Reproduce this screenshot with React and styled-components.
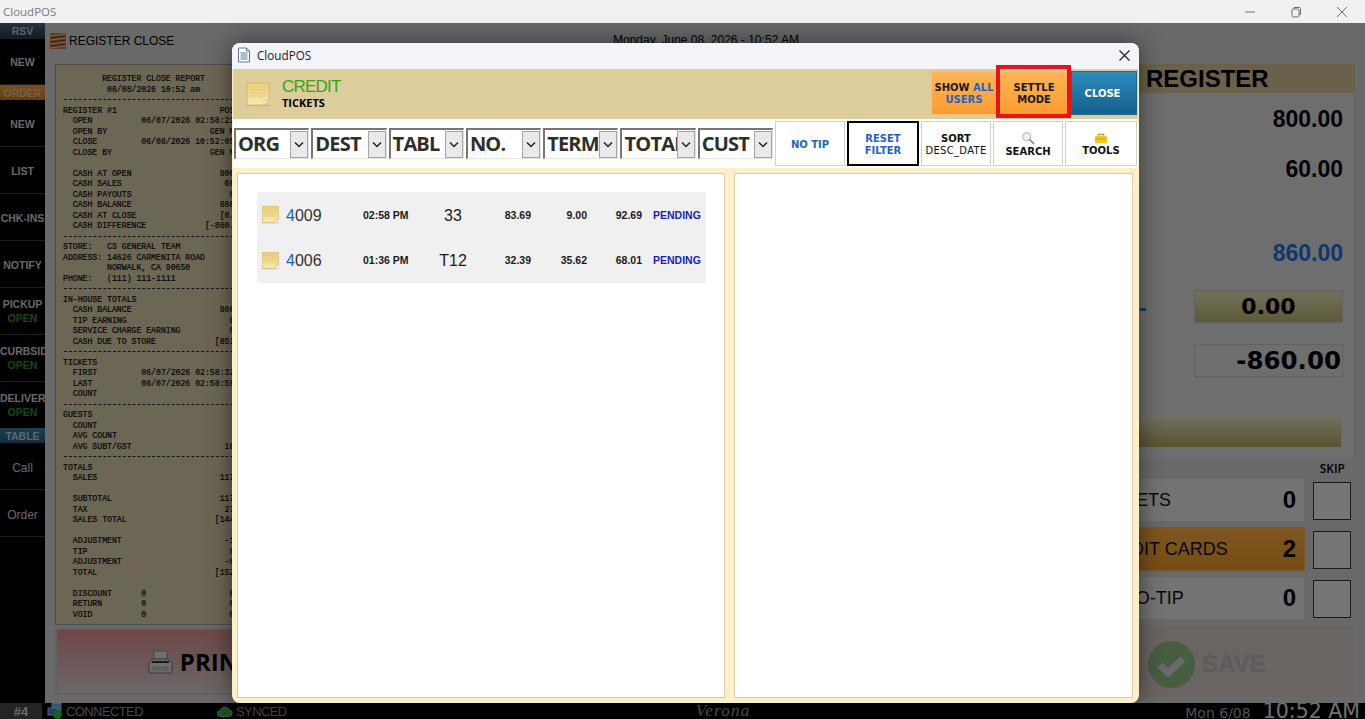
import React from "react"
import styled, { createGlobalStyle } from "styled-components"

const GlobalStyle = createGlobalStyle`
  html, body {
    margin: 0;
    padding: 0;
    height: 100%;
    overflow: hidden;
    font-family: "Liberation Sans", Arial, sans-serif;
  }
  * {
    box-sizing: border-box;
  }
`

const Page = styled.div`
  width: 1365px;
  height: 719px;
  display: flex;
  flex-direction: column;
  overflow: hidden;
  background: #fff;
`

const TitleBar = styled.div`
  height: 23px;
  flex: none;
  display: flex;
  align-items: center;
  justify-content: space-between;
  background: #f1f1f1;
  color: #7b7b7b;
  font-family: "Open Sans", sans-serif;
  font-size: 11.5px;
  padding-left: 3px;
`

const WindowButtons = styled.div`
  display: flex;
  align-items: center;
  gap: 34px;
  padding-right: 17px;
`

const Screen = styled.div`
  position: relative;
  flex: 1;
  display: flex;
  flex-direction: column;
  min-height: 0;
`

const Overlay = styled.div`
  position: absolute;
  inset: 0;
  background: rgba(0, 0, 0, 0.5);
`

const Workspace = styled.div`
  flex: 1;
  min-height: 0;
  display: flex;
`

const Sidebar = styled.nav`
  width: 45px;
  flex: none;
  background: #000;
  display: flex;
  flex-direction: column;
  overflow: hidden;
`

const SideBand = styled.div`
  height: ${p => p.$h || 16}px;
  flex: none;
  display: flex;
  align-items: center;
  justify-content: center;
  font-size: 10.5px;
  font-weight: 700;
  color: ${p => p.$c};
  background: ${p => p.$bg};
`

const SideItem = styled.div`
  height: ${p => p.$h || 47}px;
  flex: none;
  display: flex;
  flex-direction: column;
  align-items: ${p => (p.$long ? "flex-start" : "center")};
  justify-content: center;
  overflow: hidden;
  padding-top: ${p => p.$nudge || 0}px;
  border-bottom: ${p => (p.$plain ? "none" : "1px solid #3a3a3a")};
  color: #d0d0d0;
  font-size: ${p => (p.$soft ? 12 : 10.5)}px;
  font-weight: ${p => (p.$soft ? 400 : 700)};
  line-height: 14px;
  white-space: nowrap;
`

const OpenTag = styled.span`
  align-self: center;
  color: #27922a;
`

const Main = styled.main`
  flex: 1;
  min-width: 0;
  display: flex;
  flex-direction: column;
  background: #d2d2d2;
`

const MainHeader = styled.header`
  height: 41px;
  flex: none;
  position: relative;
  display: flex;
  align-items: center;
  gap: 3px;
  padding: 0 0 6px 5px;
  color: #000;
`

const HeaderTitle = styled.span`
  font-size: 12px;
`

const HeaderDate = styled.span`
  position: absolute;
  left: 568px;
  top: 10px;
  font-size: 12px;
  white-space: nowrap;
`

const Columns = styled.div`
  flex: 1;
  min-height: 0;
  display: flex;
  justify-content: space-between;
  padding: 0 10px 6px 10px;
`

const LeftColumn = styled.div`
  width: 292px;
  display: flex;
  flex-direction: column;
  gap: 3px;
`

const Receipt = styled.pre`
  margin: 0;
  height: 561px;
  flex: none;
  padding: 9px 0 0 7px;
  background: #d8cca8;
  border: 1px solid #999;
  font-family: "Liberation Mono", monospace;
  font-size: 8.17px;
  line-height: 10.5px;
  font-weight: 400;
  color: #000;
  -webkit-text-stroke: 0.15px #000;
  overflow: hidden;
`

const PrintButton = styled.button`
  flex: 1;
  margin-bottom: 2px;
  border: 2px solid #c2c2c2;
  background: linear-gradient(#de8f8f, #d9b3b3 55%, #d6d0d0);
  display: flex;
  align-items: center;
  justify-content: center;
  gap: 7px;
  font-family: "Open Sans", sans-serif;
  font-size: 24px;
  font-weight: 700;
  color: #000;
  padding: 0 2px 0 0;
`

const RightColumn = styled.div`
  width: 270px;
  display: flex;
  flex-direction: column;
`

const RegisterHead = styled.div`
  height: 29px;
  flex: none;
  background: #d4c395;
  font-size: 24px;
  font-weight: 700;
  color: #000;
  line-height: 30px;
  padding-left: 61px;
`

const RegisterBody = styled.div`
  height: 365px;
  flex: none;
  background: #dcdcdc;
  border-right: 1px solid #c4c4c4;
  padding: 14px 11px 0 0;
  display: flex;
  flex-direction: column;
  align-items: flex-end;
`

const Amount = styled.div`
  height: 24px;
  margin-bottom: ${p => p.$after}px;
  font-size: 23px;
  font-weight: 700;
  line-height: 24px;
  color: ${p => p.$color || "#000"};
`

const AmountRow = styled.div`
  display: flex;
  align-items: center;
  justify-content: space-between;
  width: 100%;
  margin-bottom: 21px;
`

const BlueDash = styled.span`
  padding: 4px 0 0 54px;
  font-size: 23px;
  font-weight: 700;
  color: #1e6fdc;
`

const TenderBox = styled.div`
  width: 149px;
  height: 33px;
  border: 1px solid #c4c4c4;
  display: flex;
  align-items: center;
  justify-content: ${p => (p.$bar ? "center" : "flex-end")};
  padding-right: ${p => (p.$bar ? 0 : 1)}px;
  font-family: "DejaVu Sans", sans-serif;
  font-size: ${p => (p.$bar ? 22 : 24.5)}px;
  font-weight: 700;
  color: #000;
  background: ${p => (p.$bar ? "linear-gradient(#e4e0b8, #bcb672)" : "transparent")};
`

const OliveBar = styled.div`
  align-self: flex-end;
  width: 240px;
  height: 32px;
  margin: 38px 2px 0 0;
  background: linear-gradient(#e2e2c8, #b0a860);
`

const SkipLabel = styled.div`
  height: 20px;
  flex: none;
  padding-top: 2px;
  padding-right: 10px;
  text-align: right;
  font-family: "Open Sans", sans-serif;
  font-size: 12px;
  font-weight: 600;
  color: #000;
`

const CountRow = styled.div`
  height: 49px;
  flex: none;
  display: flex;
  align-items: flex-start;
  gap: 8px;
  padding-right: 4px;
`

const CountCard = styled.div`
  width: 220px;
  height: 44px;
  display: flex;
  align-items: center;
  justify-content: space-between;
  padding: 0 8px 0 ${p => p.$pad}px;
  background: ${p => (p.$active ? "linear-gradient(#fcae42, #ee9a24)" : "#e6e6e6")};
  border: 1px solid ${p => (p.$active ? "#f0b060" : "#d0d0d0")};
  font-size: 18px;
  color: #111;
  white-space: nowrap;
`

const CountValue = styled.b`
  font-size: 24px;
  color: #000;
`

const SkipBox = styled.div`
  width: 38px;
  height: 38px;
  margin-top: 4px;
  background: #ececec;
  border: 1px solid #333;
`

const SaveButton = styled.div`
  flex: 1;
  margin: 0 2px 0 0;
  display: flex;
  align-items: center;
  gap: 7px;
  padding: 6px 0 0 63px;
  background: #d4c8c4;
  font-size: 24px;
  font-weight: 700;
  color: #bcb6b4;
`

const StatusBar = styled.footer`
  height: 16px;
  flex: none;
  display: flex;
  align-items: center;
  background: #000;
  color: #909090;
  font-size: 13px;
  letter-spacing: -0.6px;
  overflow: hidden;
`

const StatusCell = styled.div`
  width: 42px;
  height: 100%;
  flex: none;
  display: flex;
  align-items: center;
  justify-content: center;
  background: #484848;
  font-weight: 700;
  font-size: 13px;
  letter-spacing: 0;
  color: #d0d0d0;
`

const StatusItem = styled.div`
  display: flex;
  align-items: center;
  gap: 3px;
  width: ${p => p.$w}px;
  flex: none;
  padding-left: ${p => p.$pad || 0}px;
`

const Brand = styled.div`
  width: 252px;
  flex: none;
  text-align: center;
  font-family: "Liberation Serif", serif;
  font-style: italic;
  font-size: 17px;
  line-height: 16px;
  letter-spacing: 1.2px;
  color: #a8a8a8;
`

const Clock = styled.div`
  margin-left: auto;
  align-self: flex-start;
  display: flex;
  align-items: baseline;
  gap: 12px;
  padding: 1px 5px 0 0;
  font-family: "DejaVu Sans", sans-serif;
  font-size: 14px;
  letter-spacing: 0;
  color: #a0a0a0;
  line-height: 15px;
`

const ClockTime = styled.span`
  font-size: 20.5px;
  color: #e0e0e0;
`

const Modal = styled.section`
  position: absolute;
  left: 232px;
  top: 20px;
  width: 907px;
  height: 660px;
  display: flex;
  flex-direction: column;
  border-radius: 8px;
  background: #fdf0c9;
  box-shadow: 0 0 24px rgba(0, 0, 0, 0.5);
  overflow: hidden;
`

const ModalTitle = styled.div`
  height: 26px;
  flex: none;
  display: flex;
  align-items: center;
  gap: 6px;
  padding: 0 9px 2px 5px;
  background: #f3f4f9;
  font-family: "Open Sans", sans-serif;
  font-size: 11.7px;
  color: #1a1a1a;
`

const CloseX = styled.span`
  margin-left: auto;
  display: flex;
`

const ModalHead = styled.div`
  height: 50px;
  flex: none;
  margin: 0 1px;
  display: flex;
  align-items: center;
  background: #dccd9a;
  padding-left: 12px;
`

const HeadText = styled.div`
  margin-left: 11px;
  display: flex;
  flex-direction: column;
  margin-bottom: 2px;
`

const HeadTitle = styled.span`
  font-size: 17px;
  letter-spacing: -0.8px;
  line-height: 20px;
  color: #3aa31a;
`

const HeadSub = styled.span`
  font-family: "Open Sans", sans-serif;
  font-size: 11px;
  font-weight: 700;
  line-height: 12px;
  color: #000;
`

const HeadActions = styled.div`
  margin-left: auto;
  height: 100%;
  display: flex;
  align-items: center;
  padding-right: 1px;
`

const ActionButton = styled.button`
  position: relative;
  width: ${p => p.$w}px;
  height: 44px;
  margin-bottom: 2px;
  padding: 2px ${p => (p.$blue ? 3 : 0)}px 0 0;
  border: 1px solid ${p => (p.$blue ? "#1d6a94" : "#eec27c")};
  background: ${p =>
    p.$blue
      ? "linear-gradient(#2e8dbf, #155f8c)"
      : "linear-gradient(#fdb45a, #fb9c2e)"};
  color: ${p => (p.$blue ? "#fff" : "#1a1a1a")};
  font-family: "DejaVu Sans", sans-serif;
  font-size: 10px;
  font-weight: 700;
  line-height: 12px;
  text-align: center;
`

const Accent = styled.span`
  color: ${p => p.$c || "#1f62c8"};
`

const RedFrame = styled.span`
  position: absolute;
  left: -2px;
  right: -1px;
  top: -7px;
  bottom: -4px;
  border: 4px solid #e8141c;
  pointer-events: none;
`

const Toolbar = styled.div`
  height: 49px;
  flex: none;
  margin: 0 1px;
  display: flex;
  align-items: center;
  justify-content: space-between;
  background: #fff;
  padding: 0 1px;
`

const Filters = styled.div`
  display: flex;
  gap: 2px;
`

const FilterBox = styled.div`
  width: 75.3px;
  height: 31px;
  position: relative;
  display: flex;
  align-items: center;
  overflow: hidden;
  border: 1px solid #e4e4e4;
  border-left: 2px solid #767676;
  border-top: 2px solid #767676;
  padding: 0 0 2px 2px;
  font-family: "Open Sans", sans-serif;
  font-size: 20px;
  letter-spacing: -0.8px;
  font-weight: 700;
  color: #2e2e2e;
  white-space: nowrap;
`

const FilterArrow = styled.span`
  position: absolute;
  right: 0;
  top: 1px;
  bottom: 0;
  width: 18px;
  display: flex;
  align-items: center;
  justify-content: center;
  background: #e9e9e9;
  border: 1px solid #a4a4a4;
`

const ToolButtons = styled.div`
  display: flex;
  gap: 2px;
`

const ToolButton = styled.button`
  width: ${p => p.$w || 70}px;
  height: 45px;
  padding: 2px 0 0;
  display: flex;
  flex-direction: column;
  align-items: center;
  justify-content: center;
  gap: ${p => (p.$icon ? 1 : 0)}px;
  background: #fff;
  border: ${p => (p.$on ? "2px solid #000" : "1px solid #d0d0d0")};
  color: ${p => p.$c || "#111"};
  font-family: "DejaVu Sans", sans-serif;
  font-size: 10px;
  font-weight: 700;
  line-height: 12px;
`

const SortDetail = styled.span`
  font-weight: 400;
  font-size: 10px;
  letter-spacing: 0.3px;
`

const Panels = styled.div`
  flex: 1;
  min-height: 0;
  display: flex;
  gap: 9px;
  padding: 5px;
`

const Panel = styled.div`
  width: ${p => p.$w}px;
  flex: none;
  height: 100%;
  background: #fff;
  border: 1px solid #d9cca8;
  padding: ${p => (p.$list ? "18px 18px 0 19px" : 0)};
`

const TicketList = styled.div`
  background: #f0f0f0;
`

const TicketRow = styled.div`
  height: 45.5px;
  display: grid;
  grid-template-columns: 25px 77px 48px 84px 36px 56px 55px 1fr;
  align-items: center;
  padding-left: 4px;
  font-size: 10.5px;
  font-weight: 700;
  color: #1a1a1a;
`

const TicketNo = styled.span`
  padding-top: 2px;
  font-size: 16px;
  font-weight: 400;
  color: #333;
`

const TicketLead = styled.span`
  color: #1f62b4;
`

const TicketTable = styled.span`
  padding-top: 2px;
  font-size: 16px;
  font-weight: 400;
  text-align: center;
`

const Money = styled.span`
  text-align: right;
`

const Status = styled.span`
  padding-left: 11px;
  color: #1c1cc0;
`

const receiptLines = `        REGISTER CLOSE REPORT
         06/08/2026 10:52 am
----------------------------------------
REGISTER #1                     POS
  OPEN          06/07/2026 02:58:21
  OPEN BY                     GEN M
  CLOSE         06/08/2026 10:52:05
  CLOSE BY                    GEN M

  CASH AT OPEN                  800.00
  CASH SALES                     60.00
  CASH PAYOUTS                    0.00
  CASH BALANCE                  860.00
  CASH AT CLOSE                 [0.00]
  CASH DIFFERENCE            [-860.00]
----------------------------------------
STORE:   CS GENERAL TEAM
ADDRESS: 14626 CARMENITA ROAD
         NORWALK, CA 90650
PHONE:   (111) 111-1111
----------------------------------------
IN-HOUSE TOTALS
  CASH BALANCE                  860.00
  TIP EARNING                     9.00
  SERVICE CHARGE EARNING          0.00
  CASH DUE TO STORE            [851.00]
----------------------------------------
TICKETS
  FIRST         06/07/2026 02:58:32
  LAST          06/07/2026 02:58:59
  COUNT
----------------------------------------
GUESTS
  COUNT
  AVG COUNT
  AVG SUBT/GST                   16.00
----------------------------------------
TOTALS
  SALES                         117.00

  SUBTOTAL                      117.00
  TAX                            27.00
  SALES TOTAL                  [144.00]

  ADJUSTMENT                     -1.00
  TIP                             9.00
  ADJUSTMENT                     -0.00
  TOTAL                        [152.00]

  DISCOUNT      0                 0.00
  RETURN        0                 0.00
  VOID          0                 0.00`

const sideTop = [
  { type: "band", label: "RSV", h: 16, c: "#b8c0d0", bg: "linear-gradient(#50607c, #2c3648)" },
  { label: "NEW", h: 46 },
  { type: "band", label: "ORDER", h: 15, c: "#ecc090", bg: "linear-gradient(#f0a040, #c87a20)" },
  { label: "NEW", nudge: 2 },
  { label: "LIST", nudge: 2 },
  { label: "CHK-INS", nudge: 2 },
  { label: "NOTIFY", nudge: 2 },
  { label: "PICKUP", open: true },
  { label: "CURBSIDE", open: true, long: true },
  { label: "DELIVERY", open: true, long: true, plain: true, h: 46 },
  { type: "band", label: "TABLE", h: 15, c: "#b0d0e0", bg: "linear-gradient(#3d7fa6, #25597a)" },
  { label: "Call", soft: true, nudge: 4 },
  { label: "Order", soft: true, nudge: 4 },
]

const filters = ["ORG", "DEST", "TABL", "NO.", "TERM", "TOTAL", "CUST"]

const tickets = [
  { no: "009", time: "02:58 PM", table: "33", sub: "83.69", tip: "9.00", total: "92.69" },
  { no: "006", time: "01:36 PM", table: "T12", sub: "32.39", tip: "35.62", total: "68.01" },
]

const NoteIcon = ({ size }) => (
  <svg width={size} height={size} viewBox="0 0 26 26">
    <defs>
      <linearGradient id="noteFill" x1="0" y1="0" x2="0" y2="1">
        <stop offset="0" stopColor="#ecd078" />
        <stop offset="0.55" stopColor="#f2dd94" />
        <stop offset="1" stopColor="#f8eab8" />
      </linearGradient>
    </defs>
    <path d="M1 24.5h24" stroke="#b9a878" strokeWidth="1" opacity="0.7" />
    <path d="M2 2h22v17l-5 5H2z" fill="url(#noteFill)" stroke="#cdb268" strokeWidth="0.8" />
    <path d="M4 6h18M4 9h18M4 12h18M4 15h18" stroke="#e0c270" strokeWidth="0.7" />
    <path d="M24 19l-5 5v-4z" fill="#fff6d2" stroke="#cfb56c" strokeWidth="0.6" />
  </svg>
)

const WindowIcon = ({ kind }) => (
  <svg width="12" height="12" viewBox="0 0 12 12" fill="none" stroke="#6e6e6e" strokeWidth="1">
    {kind === "min" && <path d="M1 6h10" />}
    {kind === "max" && (
      <>
        <rect x="2" y="3" width="7" height="8" rx="1.2" />
        <path d="M4 3V1.5h5.5a1 1 0 0 1 1 1V8.5H9" />
      </>
    )}
    {kind === "close" && <path d="M1 1l10 10M11 1L1 11" />}
  </svg>
)

const RegisterIcon = () => (
  <svg width="16" height="16" viewBox="0 0 16 16">
    <rect width="16" height="16" fill="#c77b3c" />
    <path d="M0 3l16-2M0 7l16-2M0 11l16-2M0 15l16-2" stroke="#e8c498" strokeWidth="1.2" />
    <path d="M0 5l16-2M0 9l16-2M0 13l16-2" stroke="#7a3d1c" strokeWidth="1" />
  </svg>
)

const DocIcon = () => (
  <svg width="14" height="16" viewBox="0 0 14 16" fill="none">
    <path d="M1.5 1h8l3 3v11h-11z" fill="#fff" stroke="#6c7480" />
    <path d="M9.5 1v3h3" stroke="#6c7480" />
    <path d="M3.5 6h7M3.5 8h7M3.5 10h7M3.5 12h7" stroke="#4f7fa8" />
  </svg>
)

const Chevron = () => (
  <svg width="10" height="7" viewBox="0 0 10 7" fill="none" stroke="#222" strokeWidth="1.5">
    <path d="M1 1.5l4 4 4-4" />
  </svg>
)

const SearchIcon = () => (
  <svg width="14" height="14" viewBox="0 0 16 15" fill="none">
    <circle cx="6.5" cy="6" r="4.6" fill="#eef1f4" stroke="#b4b8bc" strokeWidth="1.2" />
    <path d="M10 9.5l4.5 4.5" stroke="#8a8a8a" strokeWidth="2" strokeLinecap="round" />
  </svg>
)

const ToolsIcon = () => (
  <svg width="14" height="11" viewBox="0 0 16 13">
    <path d="M5 3V1.5h6V3" fill="none" stroke="#a88a20" strokeWidth="1.2" />
    <rect x="1" y="3" width="14" height="9" rx="1.5" fill="#f6c820" />
    <path d="M1 7h14" stroke="#c89a10" strokeWidth="1" />
  </svg>
)

const PrinterIcon = () => (
  <svg width="25" height="24" viewBox="0 0 25 24">
    <path d="M6 1h13v8H6z" fill="#dfe3e6" stroke="#888" />
    <path d="M5 9h15l4 4v9a1 1 0 0 1-1 1H2a1 1 0 0 1-1-1v-9z" fill="#d8d8d8" stroke="#777" />
    <path d="M4 11h17v2H4z" fill="#333" />
    <path d="M5 17h15v3H5z" fill="#c4c4c4" stroke="#999" strokeWidth="0.6" />
  </svg>
)

const CheckIcon = () => (
  <svg width="47" height="47" viewBox="0 0 47 47">
    <circle cx="23.5" cy="23.5" r="23.5" fill="#90bc80" />
    <path d="M12 24l8 8 15-14" fill="none" stroke="#d4d4d4" strokeWidth="7" />
  </svg>
)

const LinkIcon = () => (
  <svg width="16" height="16" viewBox="0 0 16 16">
    <rect x="5" y="0.5" width="9" height="7" fill="#6fa8e8" stroke="#9cc6f4" />
    <rect x="1" y="5" width="9" height="7" fill="#3f7fd0" stroke="#9cc6f4" />
    <circle cx="10.5" cy="11.5" r="4.5" fill="#28c828" />
  </svg>
)

const CloudIcon = () => (
  <svg width="16" height="11" viewBox="0 0 16 11">
    <path
      d="M3.5 10.5a3 3 0 0 1-.4-6A5 5 0 0 1 12.4 4 3.3 3.3 0 0 1 12.5 10.5z"
      fill="#3f9c4f"
      stroke="#6fd080"
      strokeWidth="0.8"
    />
  </svg>
)

export default function App() {
  return (
    <Page>
      <GlobalStyle />
      <TitleBar>
        CloudPOS
        <WindowButtons>
          <WindowIcon kind="min" />
          <WindowIcon kind="max" />
          <WindowIcon kind="close" />
        </WindowButtons>
      </TitleBar>
      <Screen>
        <Workspace>
          <Sidebar>
            {sideTop.map((item, i) =>
              item.type === "band" ? (
                <SideBand key={i} $h={item.h} $bg={item.bg} $c={item.c}>
                  {item.label}
                </SideBand>
              ) : (
                <SideItem
                  key={i}
                  $h={item.h}
                  $soft={item.soft}
                  $plain={item.plain}
                  $long={item.long}
                  $nudge={item.nudge}
                >
                  {item.label}
                  {item.open && <OpenTag>OPEN</OpenTag>}
                </SideItem>
              )
            )}
          </Sidebar>
          <Main>
            <MainHeader>
              <RegisterIcon />
              <HeaderTitle>REGISTER CLOSE</HeaderTitle>
              <HeaderDate>Monday, June 08, 2026 - 10:52 AM</HeaderDate>
            </MainHeader>
            <Columns>
              <LeftColumn>
                <Receipt>{receiptLines}</Receipt>
                <PrintButton>
                  <PrinterIcon />
                  PRINT
                </PrintButton>
              </LeftColumn>
              <RightColumn>
                <RegisterHead>REGISTER</RegisterHead>
                <RegisterBody>
                  <Amount $after={26}>800.00</Amount>
                  <Amount $after={60}>60.00</Amount>
                  <Amount $after={25} $color="#1e6fdc">860.00</Amount>
                  <AmountRow>
                    <BlueDash>-</BlueDash>
                    <TenderBox $bar>0.00</TenderBox>
                  </AmountRow>
                  <TenderBox>-860.00</TenderBox>
                  <OliveBar />
                </RegisterBody>
                <SkipLabel>SKIP</SkipLabel>
                <CountRow>
                  <CountCard $pad={9}>TICKETS<CountValue>0</CountValue></CountCard>
                  <SkipBox />
                </CountRow>
                <CountRow>
                  <CountCard $active $pad={7}>CREDIT CARDS<CountValue>2</CountValue></CountCard>
                  <SkipBox />
                </CountRow>
                <CountRow>
                  <CountCard $pad={14}>AUTO-TIP<CountValue>0</CountValue></CountCard>
                  <SkipBox />
                </CountRow>
                <SaveButton>
                  <CheckIcon />
                  SAVE
                </SaveButton>
              </RightColumn>
            </Columns>
          </Main>
        </Workspace>
        <StatusBar>
          <StatusCell>#4</StatusCell>
          <StatusItem $w={175} $pad={5}>
            <LinkIcon />
            CONNECTED
          </StatusItem>
          <StatusItem $w={380}>
            <CloudIcon />
            SYNCED
          </StatusItem>
          <Brand>Verona</Brand>
          <Clock>
            Mon 6/08
            <ClockTime>10:52 AM</ClockTime>
          </Clock>
        </StatusBar>
        <Overlay />
        <Modal>
          <ModalTitle>
            <DocIcon />
            CloudPOS
            <CloseX>
              <svg width="11" height="11" viewBox="0 0 11 11" stroke="#222" strokeWidth="1.2">
                <path d="M0.5 0.5l10 10M10.5 0.5l-10 10" />
              </svg>
            </CloseX>
          </ModalTitle>
          <ModalHead>
            <NoteIcon size={26} />
            <HeadText>
              <HeadTitle>CREDIT</HeadTitle>
              <HeadSub>TICKETS</HeadSub>
            </HeadText>
            <HeadActions>
              <ActionButton $w={66}>
                SHOW <Accent>ALL</Accent>
                <br />
                <Accent>USERS</Accent>
              </ActionButton>
              <ActionButton $w={74}>
                SETTLE
                <br />
                MODE
                <RedFrame />
              </ActionButton>
              <ActionButton $w={66} $blue>CLOSE</ActionButton>
            </HeadActions>
          </ModalHead>
          <Toolbar>
            <Filters>
              {filters.map(name => (
                <FilterBox key={name}>
                  {name}
                  <FilterArrow>
                    <Chevron />
                  </FilterArrow>
                </FilterBox>
              ))}
            </Filters>
            <ToolButtons>
              <ToolButton $c="#1f62c8">NO TIP</ToolButton>
              <ToolButton $w={72} $on $c="#1f62c8">RESET<br />FILTER</ToolButton>
              <ToolButton>
                SORT
                <SortDetail>DESC_DATE</SortDetail>
              </ToolButton>
              <ToolButton $icon>
                <SearchIcon />
                SEARCH
              </ToolButton>
              <ToolButton $w={72} $icon>
                <ToolsIcon />
                TOOLS
              </ToolButton>
            </ToolButtons>
          </Toolbar>
          <Panels>
            <Panel $w={488} $list>
              <TicketList>
                {tickets.map(t => (
                  <TicketRow key={t.no}>
                    <NoteIcon size={19} />
                    <TicketNo>
                      <TicketLead>4</TicketLead>
                      {t.no}
                    </TicketNo>
                    <span>{t.time}</span>
                    <TicketTable>{t.table}</TicketTable>
                    <Money>{t.sub}</Money>
                    <Money>{t.tip}</Money>
                    <Money>{t.total}</Money>
                    <Status>PENDING</Status>
                  </TicketRow>
                ))}
              </TicketList>
            </Panel>
            <Panel $w={399} />
          </Panels>
        </Modal>
      </Screen>
    </Page>
  )
}
